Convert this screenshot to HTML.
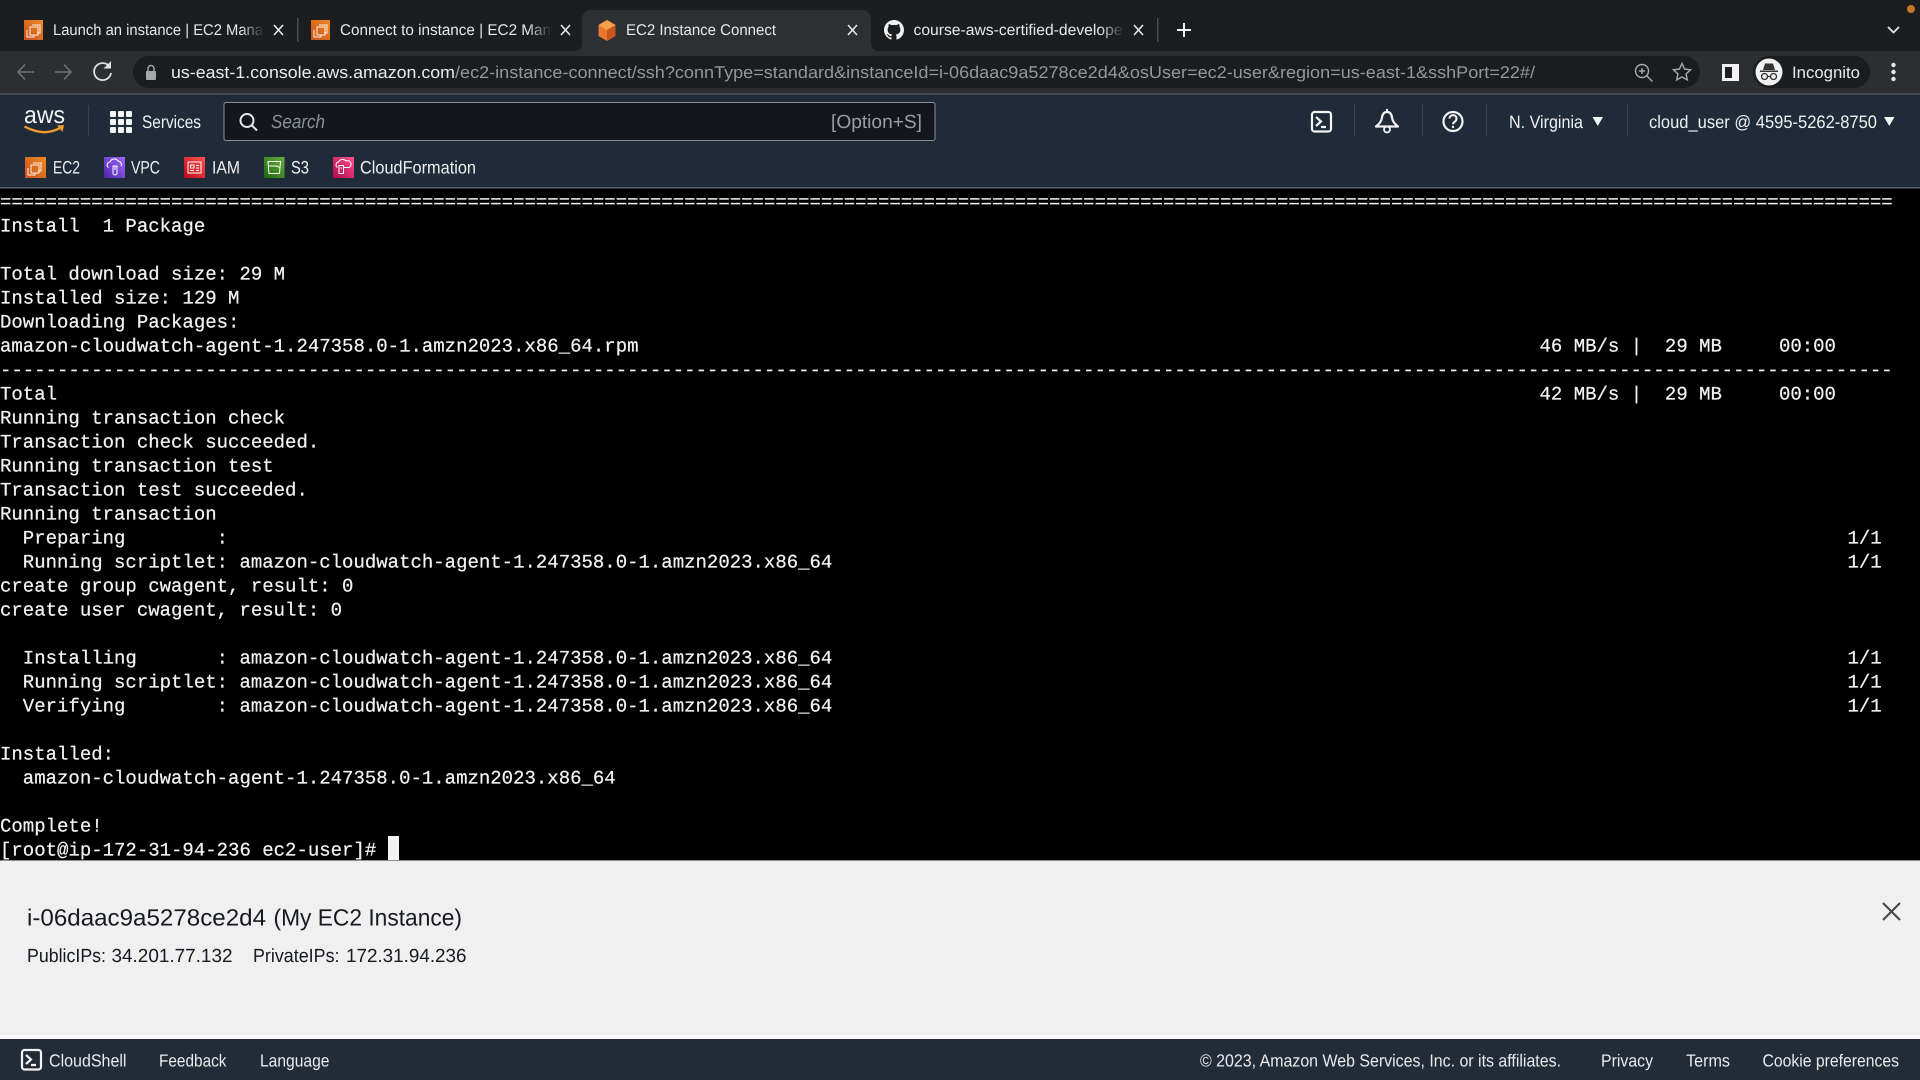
<!DOCTYPE html>
<html lang="en"><head><meta charset="utf-8"><title>EC2 Instance Connect</title>
<style>
html,body{margin:0;padding:0;background:#000;width:1920px;height:1080px;overflow:hidden}
svg{display:block;position:absolute;left:0;top:0}
text{font-family:"Liberation Sans",sans-serif;text-rendering:geometricPrecision;white-space:pre}
.m text{font-family:"Liberation Mono",monospace;font-size:19px;fill:#f2f2f2;stroke:#f2f2f2;stroke-width:.22px}
.tab{font-size:15.500px;fill:#e6e7e9}
.nav{font-size:18px;fill:#eef0f1}
.ft{font-size:17.500px;fill:#e9ebed}
</style></head><body>
<svg width="1920" height="1080" viewBox="0 0 1920 1080" xmlns="http://www.w3.org/2000/svg">
<defs>
<linearGradient id="o" x1="0" y1="1" x2="1" y2="0"><stop offset="0" stop-color="#c8511b"/><stop offset="1" stop-color="#f08a24"/></linearGradient>
<linearGradient id="p" x1="0" y1="1" x2="1" y2="0"><stop offset="0" stop-color="#4d27a8"/><stop offset="1" stop-color="#a166ff"/></linearGradient>
<linearGradient id="r" x1="0" y1="1" x2="1" y2="0"><stop offset="0" stop-color="#bd0816"/><stop offset="1" stop-color="#ff5252"/></linearGradient>
<linearGradient id="g" x1="0" y1="1" x2="1" y2="0"><stop offset="0" stop-color="#1b660f"/><stop offset="1" stop-color="#6cae3e"/></linearGradient>
<linearGradient id="k" x1="0" y1="1" x2="1" y2="0"><stop offset="0" stop-color="#b0084d"/><stop offset="1" stop-color="#ff4f8b"/></linearGradient>
<linearGradient id="f1" x1="0" x2="1"><stop offset="0" stop-color="#1c1d1f" stop-opacity="0"/><stop offset="1" stop-color="#1c1d1f"/></linearGradient>
<g id="ec2ic" fill="none" stroke="#fff" stroke-width="1" stroke-opacity=".9"><path d="M8 5h8v8h-3M6 7h8v8H6zM3 10v7h7v-2"/></g>
</defs>

<!-- tab strip -->
<rect width="1920" height="51" fill="#1c1d1f"/>
<path d="M574 51q8 0 8-8V20q0-10 10-10h269q10 0 10 10v23q0 8 8 8z" fill="#2d2f33"/>

<rect x="24" y="20" width="19" height="20" fill="url(#o)"/><use href="#ec2ic" x="24" y="20"/>
<text class="tab" x="53" y="35" textLength="210" lengthAdjust="spacingAndGlyphs">Launch an instance | EC2 Mana</text>
<rect x="240" y="18" width="24" height="24" fill="url(#f1)"/>
<path d="M274 25l9 10M283 25l-9 10" stroke="#e6e7e9" stroke-width="1.600"/>
<rect x="297" y="18" width="1.500" height="24" fill="#4a4b4e"/>

<rect x="311" y="20" width="19" height="20" fill="url(#o)"/><use href="#ec2ic" x="311" y="20"/>
<text class="tab" x="340" y="35" textLength="211" lengthAdjust="spacingAndGlyphs">Connect to instance | EC2 Man</text>
<rect x="528" y="18" width="24" height="24" fill="url(#f1)"/>
<path d="M561 25l9 10M570 25l-9 10" stroke="#e6e7e9" stroke-width="1.600"/>

<path d="M607 20l8.500 5v11l-8.500 5l-8.500-5V25z" fill="#e8762c"/>
<path d="M607 30l8.500-5v11l-8.500 5z" fill="#c8561c"/><path d="M607 20l8.500 5l-8.500 5l-8.500-5z" fill="#f5a04a"/>
<text class="tab" x="626" y="35" textLength="150" lengthAdjust="spacingAndGlyphs">EC2 Instance Connect</text>
<path d="M848 25l9 10M857 25l-9 10" stroke="#e6e7e9" stroke-width="1.600"/>

<g transform="translate(884 20) scale(.833)" fill="#f2f2f2"><path d="M12 0C5.370 0 0 5.370 0 12c0 5.300 3.440 9.800 8.200 11.390.6.110.82-.26.82-.58v-2.030c-3.340.73-4.040-1.610-4.040-1.610-.55-1.390-1.330-1.760-1.330-1.760-1.090-.74.08-.73.08-.73 1.200.08 1.840 1.240 1.840 1.240 1.070 1.830 2.810 1.300 3.490 1 .11-.78.42-1.310.76-1.610-2.670-.3-5.470-1.330-5.470-5.930 0-1.310.47-2.380 1.240-3.220-.14-.3-.54-1.520.1-3.180 0 0 1-.32 3.300 1.230a11.500 11.500 0 016 0c2.290-1.550 3.300-1.230 3.300-1.230.64 1.660.24 2.880.12 3.180.77.84 1.230 1.910 1.230 3.220 0 4.610-2.800 5.630-5.480 5.920.43.370.82 1.100.82 2.220v3.290c0 .32.22.7.82.58A12 12 0 0024 12c0-6.630-5.370-12-12-12z"/></g>
<text class="tab" x="913.500" y="35" textLength="209" lengthAdjust="spacingAndGlyphs">course-aws-certified-develope</text>
<rect x="1100" y="18" width="24" height="24" fill="url(#f1)"/>
<path d="M1134 25l9 10M1143 25l-9 10" stroke="#e6e7e9" stroke-width="1.600"/>
<rect x="1157" y="18" width="1.500" height="24" fill="#4a4b4e"/>
<path d="M1184 23v14M1177 30h14" stroke="#f1f2f3" stroke-width="2"/>
<circle cx="1911" cy="9" r="4" fill="#c8742a"/>
<path d="M1888 27l5.500 5.500L1899 27" fill="none" stroke="#e6e7e9" stroke-width="1.800"/>

<!-- toolbar -->
<rect y="51" width="1920" height="42" fill="#2d2e31"/>
<rect y="93" width="1920" height="2" fill="#47494c"/>
<rect x="133" y="56" width="1567" height="32" rx="16" fill="#1b1c1f"/>
<g fill="none" stroke-width="1.500">
<path d="M34 72H18M25 64.500L18 72l7 7.500" stroke="#717377"/>
<path d="M55 72h16M64 64.500l7 7.500l-7 7.500" stroke="#717377"/>
<path d="M109 66a8.500 8.500 0 1 0 2 7" stroke="#e0e1e3" stroke-width="1.800"/>
</g>
<path d="M111 61v7.500h-7.500z" fill="#e0e1e3"/>
<rect x="146" y="71" width="10" height="9" rx="1" fill="#a5a6a9"/><path d="M148 71v-2.500a3 3 0 0 1 6 0V71" fill="none" stroke="#a5a6a9" stroke-width="1.500"/>
<text x="171" y="78" font-size="17" fill="#e9eaec" textLength="284" lengthAdjust="spacingAndGlyphs">us-east-1.console.aws.amazon.com</text>
<text x="455" y="78" font-size="17" fill="#95979b" textLength="1080" lengthAdjust="spacingAndGlyphs">/ec2-instance-connect/ssh?connType=standard&amp;instanceId=i-06daac9a5278ce2d4&amp;osUser=ec2-user&amp;region=us-east-1&amp;sshPort=22#/</text>
<g fill="none" stroke="#a9aaad" stroke-width="1.400">
<circle cx="1642" cy="71" r="6.500"/><path d="M1647 76l5.500 5.500M1642 68v6M1639 71h6"/>
<path d="M1682 63.500l2.600 5.600 6 .7-4.500 4.100 1.200 6-5.300-3-5.300 3 1.200-6-4.500-4.100 6-.7z"/>
</g>
<rect x="1722" y="64" width="17" height="17" fill="#f1f1f1"/><rect x="1725" y="67" width="7" height="11" fill="#1f2022"/>
<rect x="1753" y="56" width="117" height="32" rx="16" fill="#1b1c1f"/>
<circle cx="1769" cy="72" r="13.500" fill="#f1f1f1"/>
<path d="M1760 70.500h18v1.500h-18zM1763 70l2-6.500h8l2 6.500z" fill="#333"/>
<circle cx="1764.500" cy="76.500" r="3" fill="none" stroke="#333" stroke-width="1.300"/><circle cx="1773.500" cy="76.500" r="3" fill="none" stroke="#333" stroke-width="1.300"/>
<path d="M1767.500 76.500h3" stroke="#333" stroke-width="1.200"/>
<text x="1792" y="78" font-size="16.500" fill="#e9eaec" textLength="68" lengthAdjust="spacingAndGlyphs">Incognito</text>
<g fill="#e6e7e9"><circle cx="1893.500" cy="65" r="2.200"/><circle cx="1893.500" cy="72" r="2.200"/><circle cx="1893.500" cy="79" r="2.200"/></g>

<!-- AWS nav -->
<rect y="95" width="1920" height="93" fill="#202b39"/>
<rect y="187" width="1920" height="1.500" fill="#5c626b"/>
<text x="24" y="123" font-size="24" fill="#f2f3f4" textLength="41" lengthAdjust="spacingAndGlyphs">aws</text>
<path d="M24.500 126.500Q44 137 60 128" fill="none" stroke="#f29a2e" stroke-width="2.400"/>
<path d="M57 125.500l7-.5-1.500 7z" fill="#f29a2e"/>
<rect x="88" y="105" width="1" height="31" fill="#36404e"/>
<g fill="#f2f3f4">
<rect x="110" y="111" width="6" height="6" rx="1"/><rect x="118" y="111" width="6" height="6" rx="1"/><rect x="126" y="111" width="6" height="6" rx="1"/>
<rect x="110" y="119" width="6" height="6" rx="1"/><rect x="118" y="119" width="6" height="6" rx="1"/><rect x="126" y="119" width="6" height="6" rx="1"/>
<rect x="110" y="127" width="6" height="6" rx="1"/><rect x="118" y="127" width="6" height="6" rx="1"/><rect x="126" y="127" width="6" height="6" rx="1"/>
</g>
<text class="nav" x="142" y="128" textLength="59" lengthAdjust="spacingAndGlyphs">Services</text>
<rect x="224" y="102.500" width="711" height="38" rx="2" fill="#13171d" stroke="#8b9096" stroke-width="1"/>
<circle cx="247" cy="120.500" r="6.500" fill="none" stroke="#e6e7e9" stroke-width="2"/><path d="M252 125.500l5 5" stroke="#e6e7e9" stroke-width="2"/>
<text x="271" y="128" font-size="19" font-style="italic" fill="#8b9096" textLength="54" lengthAdjust="spacingAndGlyphs">Search</text>
<text x="831" y="128" font-size="19" fill="#9a9ea3" textLength="91" lengthAdjust="spacingAndGlyphs">[Option+S]</text>

<rect x="1312" y="112" width="19" height="19.500" rx="2.500" fill="none" stroke="#f2f3f4" stroke-width="2.200"/>
<path d="M1316 117l5 4.500-5 4.500M1321 127h5" fill="none" stroke="#f2f3f4" stroke-width="2.200"/>
<rect x="1354" y="104" width="1" height="32" fill="#36404e"/>
<path d="M1387 112c-3 0-4.500 2-5 5.500-.5 4-2.500 6-6 9h22c-3.500-3-5.500-5-6-9-.5-3.500-2-5.500-5-5.500z" fill="none" stroke="#f2f3f4" stroke-width="2.200" stroke-linejoin="round"/>
<path d="M1387 109v3" stroke="#f2f3f4" stroke-width="2"/><circle cx="1387" cy="129.500" r="3" fill="none" stroke="#f2f3f4" stroke-width="1.800"/>
<rect x="1422" y="104" width="1" height="32" fill="#36404e"/>
<circle cx="1453" cy="121.500" r="9.500" fill="none" stroke="#f2f3f4" stroke-width="2.200"/>
<path d="M1449.500 118.500a3.500 3.500 0 1 1 5.500 3c-1.300.9-2 1.400-2 2.800" fill="none" stroke="#f2f3f4" stroke-width="2"/><circle cx="1453" cy="127" r="1.200" fill="#f2f3f4"/>
<rect x="1486" y="104" width="1" height="32" fill="#36404e"/>
<text class="nav" x="1509" y="128" textLength="74" lengthAdjust="spacingAndGlyphs">N. Virginia</text>
<path d="M1592.500 117h10.500l-5.250 9z" fill="#f2f3f4"/>
<rect x="1627" y="104" width="1" height="32" fill="#36404e"/>
<text class="nav" x="1649" y="128" textLength="228" lengthAdjust="spacingAndGlyphs">cloud_user @ 4595-5262-8750</text>
<path d="M1884 117h10.500l-5.250 9z" fill="#f2f3f4"/>

<!-- shortcuts -->
<rect x="25" y="157" width="21" height="21" fill="url(#o)"/><use href="#ec2ic" x="25" y="158"/>
<text class="nav" x="53" y="173.500" textLength="27" lengthAdjust="spacingAndGlyphs">EC2</text>
<rect x="104" y="157" width="21" height="21" fill="url(#p)"/>
<path d="M108.500 167.500a3 3 0 0 1 1.500-5.500a4.500 4.500 0 0 1 8-1a3.500 3.500 0 0 1 3 5M113 166h4v7a2 2 0 0 1-4 0zM115 166v4" fill="none" stroke="#fff" stroke-width="1"/>
<text class="nav" x="131" y="173.500" textLength="29" lengthAdjust="spacingAndGlyphs">VPC</text>
<rect x="184" y="157" width="21" height="21" fill="url(#r)"/>
<path d="M188 162h13v11h-13zM190.500 165h3.500v3h-3.500zM190 170.500h4M196 165.500h3M196 168h3M196 170.500h3" fill="none" stroke="#fff" stroke-width="1"/>
<text class="nav" x="212" y="173.500" textLength="28" lengthAdjust="spacingAndGlyphs">IAM</text>
<rect x="264" y="157" width="20.500" height="21" fill="url(#g)"/>
<path d="M268 161.500h12.500l-1 12h-10.500zM268.500 166h8l3.500 1.500" fill="none" stroke="#fff" stroke-width="1"/>
<text class="nav" x="291" y="173.500" textLength="18" lengthAdjust="spacingAndGlyphs">S3</text>
<rect x="333" y="157" width="21" height="21" fill="url(#k)"/>
<path d="M337.500 167.500a3 3 0 0 1 1-5.500a4.500 4.500 0 0 1 7.500-1a3.500 3.500 0 0 1 3 6.500h-6M339 165.500h4.500v8H339zM340.500 168h1.500" fill="none" stroke="#fff" stroke-width="1"/>
<text class="nav" x="360" y="173.500" textLength="116" lengthAdjust="spacingAndGlyphs">CloudFormation</text>

<!-- terminal -->
<rect y="189" width="1920" height="671" fill="#000"/>
<g class="m" transform="translate(0 -.5)">
<text x="0" y="208">======================================================================================================================================================================</text>
<text x="0" y="232">Install  1 Package</text>
<text x="0" y="280">Total download size: 29 M</text>
<text x="0" y="304">Installed size: 129 M</text>
<text x="0" y="328">Downloading Packages:</text>
<text x="0" y="352">amazon-cloudwatch-agent-1.247358.0-1.amzn2023.x86_64.rpm</text>
<text x="1539.500" y="352">46 MB/s |  29 MB     00:00</text>
<text x="0" y="376">----------------------------------------------------------------------------------------------------------------------------------------------------------------------</text>
<text x="0" y="400">Total</text>
<text x="1539.500" y="400">42 MB/s |  29 MB     00:00</text>
<text x="0" y="424">Running transaction check</text>
<text x="0" y="448">Transaction check succeeded.</text>
<text x="0" y="472">Running transaction test</text>
<text x="0" y="496">Transaction test succeeded.</text>
<text x="0" y="520">Running transaction</text>
<text x="0" y="544">  Preparing        :</text>
<text x="1847.500" y="544">1/1</text>
<text x="0" y="568">  Running scriptlet: amazon-cloudwatch-agent-1.247358.0-1.amzn2023.x86_64</text>
<text x="1847.500" y="568">1/1</text>
<text x="0" y="592">create group cwagent, result: 0</text>
<text x="0" y="616">create user cwagent, result: 0</text>
<text x="0" y="664">  Installing       : amazon-cloudwatch-agent-1.247358.0-1.amzn2023.x86_64</text>
<text x="1847.500" y="664">1/1</text>
<text x="0" y="688">  Running scriptlet: amazon-cloudwatch-agent-1.247358.0-1.amzn2023.x86_64</text>
<text x="1847.500" y="688">1/1</text>
<text x="0" y="712">  Verifying        : amazon-cloudwatch-agent-1.247358.0-1.amzn2023.x86_64</text>
<text x="1847.500" y="712">1/1</text>
<text x="0" y="760">Installed:</text>
<text x="0" y="784">  amazon-cloudwatch-agent-1.247358.0-1.amzn2023.x86_64</text>
<text x="0" y="832">Complete!</text>
<text x="0" y="856">[root@ip-172-31-94-236 ec2-user]#</text>
</g>
<rect x="388" y="836" width="11" height="24" fill="#f2f2f2"/>

<!-- info panel -->
<rect y="860" width="1920" height="179" fill="#f0f0f0"/>
<rect y="860" width="1920" height="1" fill="#8d8d8d"/>
<rect y="1035" width="1920" height="4" fill="#fafafa"/>
<text x="27" y="925.500" font-size="23.500" fill="#16191f" textLength="239" lengthAdjust="spacingAndGlyphs">i-06daac9a5278ce2d4</text>
<text x="273.500" y="925.500" font-size="23.500" fill="#16191f" textLength="188.500" lengthAdjust="spacingAndGlyphs">(My EC2 Instance)</text>
<text x="27" y="962" font-size="19" fill="#16191f" textLength="79" lengthAdjust="spacingAndGlyphs">PublicIPs:</text>
<text x="111.500" y="962" font-size="19" fill="#16191f" textLength="121" lengthAdjust="spacingAndGlyphs">34.201.77.132</text>
<text x="253" y="962" font-size="19" fill="#16191f" textLength="86.500" lengthAdjust="spacingAndGlyphs">PrivateIPs:</text>
<text x="346" y="962" font-size="19" fill="#16191f" textLength="120.500" lengthAdjust="spacingAndGlyphs">172.31.94.236</text>
<path d="M1883 903l17 17M1900 903l-17 17" stroke="#454545" stroke-width="2"/>

<!-- footer -->
<rect y="1039" width="1920" height="41" fill="#232b37"/>
<rect x="22" y="1050" width="19" height="19.500" rx="2.500" fill="none" stroke="#f2f3f4" stroke-width="2.200"/>
<path d="M26 1055l5 4.500-5 4.500M31 1065h5" fill="none" stroke="#f2f3f4" stroke-width="2.200"/>
<text class="ft" x="49" y="1066.500" textLength="77.500" lengthAdjust="spacingAndGlyphs">CloudShell</text>
<text class="ft" x="159" y="1066.500" textLength="67.500" lengthAdjust="spacingAndGlyphs">Feedback</text>
<text class="ft" x="260" y="1066.500" textLength="69.500" lengthAdjust="spacingAndGlyphs">Language</text>
<text class="ft" x="1200" y="1066.500" textLength="361" lengthAdjust="spacingAndGlyphs">© 2023, Amazon Web Services, Inc. or its affiliates.</text>
<text class="ft" x="1601" y="1066.500" textLength="52" lengthAdjust="spacingAndGlyphs">Privacy</text>
<text class="ft" x="1686" y="1066.500" textLength="44" lengthAdjust="spacingAndGlyphs">Terms</text>
<text class="ft" x="1762.500" y="1066.500" textLength="136.500" lengthAdjust="spacingAndGlyphs">Cookie preferences</text>
</svg>
</body></html>
